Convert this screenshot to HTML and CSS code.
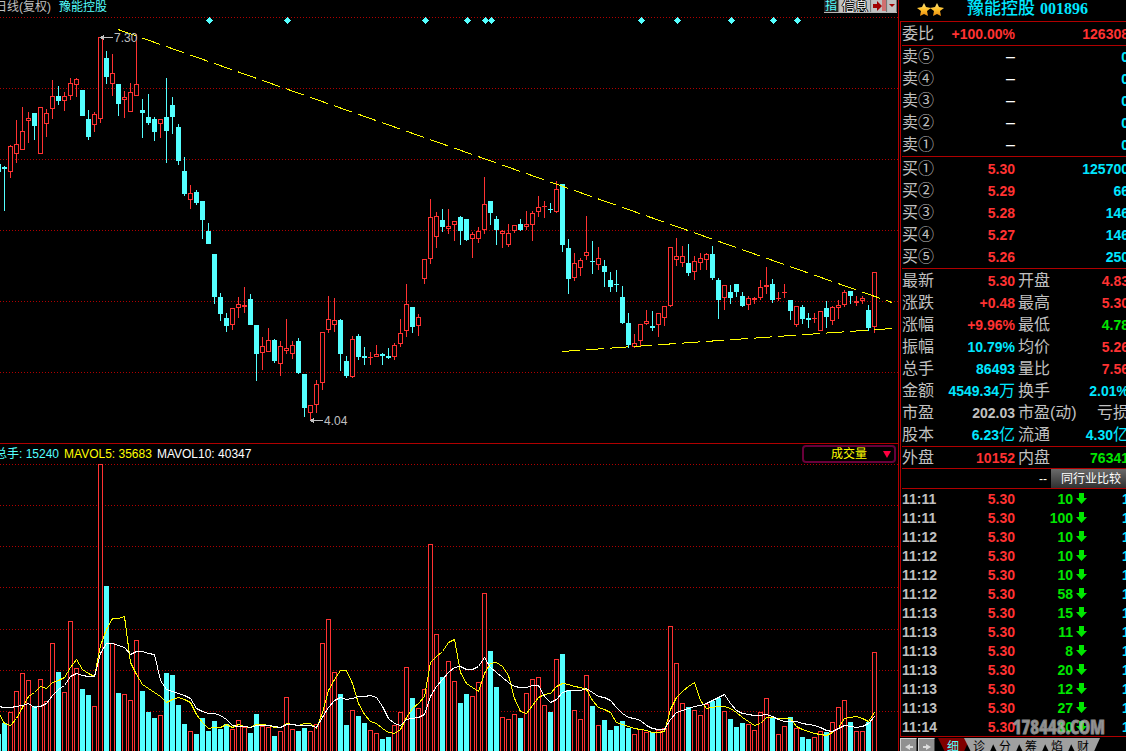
FILE: index.html
```html
<!DOCTYPE html>
<html lang="zh-CN">
<head>
<meta charset="utf-8">
<title>豫能控股 001896</title>
<link rel="stylesheet" href="styles.css">
</head>
<body>
<div class="app">
  <main class="charts">
    <header class="chart-head">
      <div class="chart-title"><span class="period">日线(复权)</span><span class="cyan">豫能控股</span></div>
      <div class="tools">
        <button class="tool tool-index" type="button">指</button>
        <button class="tool tool-info" type="button">信息</button>
        <button class="tool" type="button" aria-label="隐藏侧栏"><svg width="14" height="12" viewBox="0 0 14 12"><path d="M1 4h4V1l5 5-5 5V8H1z" fill="#a00000"/><path d="M11 0v11M13 0v11" stroke="#e02020"/></svg></button>
        <button class="tool" type="button" aria-label="更多"><svg width="8" height="12" viewBox="0 0 8 12"><path d="M1 4h6L4 7z" fill="#a00000"/></svg></button>
      </div>
    </header>
    <svg class="plot" id="price" viewBox="0 14 898 429" shape-rendering="crispEdges"></svg>
    <div class="volume-head">
      <div class="legend"><span class="cyan">总手: 15240</span><span class="yellow">MAVOL5: 35683</span><span class="white">MAVOL10: 40347</span></div>
      <label class="picker"><select aria-label="指标"><option>成交量</option></select><svg width="8" height="7" viewBox="0 0 8 7"><path d="M0 0h8L4 7z" fill="#ff0040"/></svg></label>
    </div>
    <svg class="plot" id="volume" viewBox="0 464 898 287" shape-rendering="crispEdges"></svg>
  </main>

  <aside class="side">
    <h1 class="stock">
      <svg width="28" height="15" viewBox="0 0 28 15"><defs><linearGradient id="gold" x1="0" y1="0" x2="0" y2="1"><stop offset="0" stop-color="#ffe680"/><stop offset=".5" stop-color="#ffc02a"/><stop offset="1" stop-color="#e88a10"/></linearGradient></defs><path id="star" fill="url(#gold)" d="M7 1l2 4 5 1-4 3 1 5-4-2-4 2 1-5-4-3 5-1z"/><use href="#star" x="13"/></svg>
      <span class="stock-name">豫能控股</span><span class="stock-code">001896</span>
    </h1>
    <div class="quote">
      <table class="grid3 ratio"><colgroup><col class="c-label"><col class="c-value"><col class="c-amount"></colgroup>
        <tr><th>委比</th><td class="red">+100.00%</td><td class="red">126308</td></tr>
      </table>
      <table class="grid3 rule"><colgroup><col class="c-label"><col class="c-value"><col class="c-amount"></colgroup>
        <tr><th>卖⑤</th><td class="dash">–</td><td class="aqua">0</td></tr>
        <tr><th>卖④</th><td class="dash">–</td><td class="aqua">0</td></tr>
        <tr><th>卖③</th><td class="dash">–</td><td class="aqua">0</td></tr>
        <tr><th>卖②</th><td class="dash">–</td><td class="aqua">0</td></tr>
        <tr><th>卖①</th><td class="dash">–</td><td class="aqua">0</td></tr>
      </table>
      <table class="grid3 rule roomy"><colgroup><col class="c-label"><col class="c-value"><col class="c-amount"></colgroup>
        <tr><th>买①</th><td class="red">5.30</td><td class="aqua">125700</td></tr>
        <tr><th>买②</th><td class="red">5.29</td><td class="aqua">66</td></tr>
        <tr><th>买③</th><td class="red">5.28</td><td class="aqua">146</td></tr>
        <tr><th>买④</th><td class="red">5.27</td><td class="aqua">146</td></tr>
        <tr><th>买⑤</th><td class="red">5.26</td><td class="aqua">250</td></tr>
      </table>
      <table class="grid4 rule roomy"><colgroup><col class="c-label"><col class="c-value"><col class="c-label2"><col class="c-value2"></colgroup>
        <tr><th>最新</th><td class="red">5.30</td><th>开盘</th><td class="red">4.83</td></tr>
        <tr><th>涨跌</th><td class="red">+0.48</td><th>最高</th><td class="red">5.30</td></tr>
        <tr><th>涨幅</th><td class="red">+9.96%</td><th>最低</th><td class="green">4.78</td></tr>
        <tr><th>振幅</th><td class="aqua">10.79%</td><th>均价</th><td class="red">5.26</td></tr>
        <tr><th>总手</th><td class="aqua">86493</td><th>量比</th><td class="red">7.56</td></tr>
        <tr><th>金额</th><td class="aqua">4549.34<span class="unit">万</span></td><th>换手</th><td class="aqua">2.01%</td></tr>
        <tr><th>市盈</th><td class="gray">202.03</td><th>市盈(动)</th><td class="gray"><span class="unit">亏损</span></td></tr>
        <tr><th>股本</th><td class="aqua">6.23<span class="unit">亿</span></td><th>流通</th><td class="aqua">4.30<span class="unit">亿</span></td></tr>
      </table>
      <table class="grid4 rule inout"><colgroup><col class="c-label"><col class="c-value"><col class="c-label2"><col class="c-value2"></colgroup>
        <tr><th>外盘</th><td class="red">10152</td><th>内盘</th><td class="green">76341</td></tr>
      </table>
      <div class="compare rule"><span>--</span><button type="button">同行业比较</button></div>
      <table class="ticks rule"><colgroup><col class="t-time"><col class="t-price"><col class="t-vol"><col class="t-arrow"><col class="t-count"></colgroup><tbody id="ticks"></tbody></table>
      <div class="watermark">178448.COM</div>
    </div>
    <nav class="tabs rule">
      <button class="step" type="button" aria-label="上一页"><svg width="8" height="6" viewBox="0 0 8 6"><path d="M0 3l5-3v2h3v2H5v2z" fill="#ddd"/></svg></button>
      <button class="step" type="button" aria-label="下一页"><svg width="8" height="6" viewBox="0 0 8 6"><path d="M8 3L3 0v2H0v2h3v2z" fill="#ddd"/></svg></button>
      <div class="tab-list">
        <button class="tab active" type="button">细</button><button class="tab" type="button">诊</button><button class="tab" type="button">分</button><button class="tab" type="button">筹</button><button class="tab" type="button">焰</button><button class="tab" type="button">财</button>
      </div>
    </nav>
  </aside>
</div>
<script src="chart.js"></script>
</body>
</html>
```

FILE: styles.css
```css
* { box-sizing: border-box; }
body {
  margin: 0;
  background: #000;
  color: #c0c0c0;
  font: 12px/14px "Liberation Sans", "Noto Sans CJK SC", sans-serif;
  overflow: hidden;
}
button, select { font: inherit; color: inherit; border: 0; padding: 0; margin: 0; background: none; }
.app { display: grid; grid-template-columns: minmax(0, 1fr) 228px; height: 100vh; overflow: hidden; }
.charts { min-width: 0; overflow: hidden; }
.plot { display: block; width: 100%; height: auto; }

.cyan { color: #54ffff; }
.yellow { color: #ffff00; }
.white { color: #fff; }
.red { color: #ff3232; }
.aqua { color: #00e6ff; }
.green { color: #00e600; }
.gray { color: #c0c0c0; }

.chart-head { display: flex; justify-content: space-between; height: 14px; }
.chart-title { display: flex; gap: 8px; margin-left: -5px; white-space: nowrap; line-height: 15px; }
.tools { display: flex; height: 13px; margin-right: 1px; background: #b8b8b8; gap: 1px; }
.tool { height: 12px; line-height: 11px; overflow: hidden; border-right: 1px solid #777; background: #c0c0c0; }
.tool svg { display: block; }
.tool-index { width: 15px; background: #222; color: #54ffff; }
.tool-info { width: 31px; background: #c0c0c0; color: #fff; font-size: 13px; text-shadow: 1px 0 #000, -1px 0 #000, 0 1px #000, 0 -1px #000; }

.volume-head { display: flex; justify-content: space-between; height: 21px; border-top: 1px solid #b00000; }
.legend { display: flex; gap: 5px; margin-left: -5px; padding-top: 3px; white-space: nowrap; }
.picker { display: flex; align-items: center; width: 94px; height: 18px; margin: 1px 2px 0 0; padding-right: 3px; border: 2px solid #68003a; border-radius: 4px; }
.picker select { flex: 1; min-width: 0; height: 14px; padding-left: 27px; appearance: none; color: #ffff00; line-height: 14px; }

.side { position: relative; display: flex; flex-direction: column; border-left: 1px solid #b00000; overflow: hidden; }
.stock { display: flex; align-items: center; height: 21px; margin: 0; padding: 0 0 3px 18px; color: #00e6ff; font-size: 17px; line-height: 18px; white-space: nowrap; }
.stock-name { margin-left: 22px; font-weight: 500; }
.stock-code { margin-left: 5px; font: bold 16px/18px "Liberation Serif", serif; }
.stock svg { flex: none; }
.quote { position: relative; margin-left: 1px; padding-left: 1px; border-left: 1px solid #b00000; border-top: 1px solid #b00000; overflow: hidden; }
.rule { border-top: 1px solid #b00000; }

table { width: 227px; table-layout: fixed; border-collapse: separate; border-spacing: 0; font-size: 14px; line-height: 20px; }
th, td { padding: 0; height: 22px; white-space: nowrap; }
th { font-weight: 400; font-size: 16px; text-align: left; }
td { font-weight: 700; text-align: right; }
.unit { font-size: 16px; font-weight: 400; }
.dash { color: #fff; font-size: 16px; font-weight: 400; line-height: 18px; }
.ratio td, .ratio th { height: 23px; }
.roomy { padding-top: 1px; }
.inout td, .inout th { height: 21px; }
.c-label { width: 36px; }
.c-value { width: 77px; }
.c-amount { width: 114px; }
.c-label2 { width: 60px; }
.c-value2 { width: 54px; }
.grid4 th:nth-child(3) { padding-left: 3px; }

.compare { display: flex; height: 20px; width: 224px; justify-content: flex-end; align-items: center; gap: 4px; color: #ffe; }
.compare button { width: 75px; height: 19px; padding-left: 5px; color: #fff; background: linear-gradient(#6a6a6a, #303030); }

.ticks td { height: 19px; line-height: 18px; }
.ticks td:first-child { text-align: left; }
.ticks td:last-child { text-align: left; padding-left: 34px; }
.ticks svg { display: block; margin-left: 3px; }
.t-time { width: 40px; }
.t-price { width: 73px; }
.t-vol { width: 58px; }
.t-arrow { width: 15px; }
.t-count { width: 60px; }
.watermark { position: absolute; right: 21px; bottom: -1px; color: #bbb; opacity: .8; font: bold 19px/20px "Liberation Sans Narrow", "Open Sans Condensed", "DejaVu Sans Condensed", sans-serif; -webkit-text-stroke: 1px #aaa; }

.tabs { display: flex; flex: 1; margin-left: 1px; padding-top: 1px; gap: 1px; min-height: 0; }
.step { display: grid; place-items: center; width: 17px; height: 17px; background: #909090; border: 1px solid #d0d0d0; border-right-color: #444; }
.tab-list { display: flex; }
.tab { width: 34px; height: 18px; margin-right: -8px; line-height: 17px; color: #000; background: #a0a0a0; clip-path: polygon(2px 0, 100% 0, 26px 100%, 11px 100%); }
.active { position: relative; color: #54ffff; background: #800000; }
```

FILE: chart.js
```js
// direction, high, body top, body bottom, low, volume top
const bars = `d 164 164 172 172 734
d 166 167 169 211 723
u 145 146 172 178 712
u 120 144 154 163 691
u 107 131 150 150 673
u 112 118 121 143 680
d 113 113 126 140 706
u 107 107 154 154 679
u 109 113 124 137 701
u 80 96 109 119 643
d 86 96 101 105 672
u 92 96 101 111 692
u 78 83 96 100 621
u 78 79 85 97 668
d 90 90 116 116 689
d 110 119 137 140 695
u 112 114 125 132 706
u 37 37 119 123 464
d 51 58 77 84 586
u 54 73 84 96 643
d 84 84 104 116 693
u 91 97 100 118 694
u 83 92 112 112 700
u 34 84 96 96 640
d 99 110 113 138 691
d 94 117 123 125 712
d 117 119 132 141 718
u 119 119 124 138 715
d 78 117 131 163 673
d 97 105 117 134 675
d 124 127 161 165 705
d 157 171 194 196 724
u 185 193 200 209 731
d 190 192 203 205 734
d 201 201 220 239 718
d 223 231 244 244 731
d 254 254 297 304 721
d 293 297 314 321 729
d 313 318 326 332 724
u 308 308 325 330 729
u 297 304 308 318 720
u 287 305 307 313 727
d 294 299 325 325 733
d 325 325 354 381 714
u 337 346 353 370 726
u 328 340 352 352 727
d 339 340 361 363 736
u 341 346 364 376 731
u 319 348 351 354 697
u 341 345 354 359 729
d 338 341 373 374 731
d 374 374 408 417 728
u 405 405 413 420 731
u 380 384 405 413 724
u 332 332 383 390 643
u 296 319 330 333 619
u 298 320 325 332 672
d 319 320 354 371 694
d 356 361 376 378 725
u 336 339 377 378 710
d 334 336 357 360 716
d 347 356 358 365 723
u 352 357 358 365 730
u 345 354 357 357 733
d 353 354 356 365 739
d 348 356 358 359 737
u 343 345 357 360 725
u 319 333 344 347 712
u 284 304 331 337 667
d 307 307 327 333 698
u 314 317 326 336 708
u 259 259 279 284 689
u 199 217 259 264 544
u 212 216 237 248 634
d 209 220 227 232 677
u 209 226 229 234 661
u 221 221 225 241 681
d 216 217 231 245 703
d 219 219 240 241 694
u 232 234 239 258 696
u 227 231 239 243 682
u 177 204 230 234 593
d 201 201 213 225 651
d 216 219 230 245 687
u 230 231 234 248 717
u 224 233 245 247 719
u 225 225 231 233 714
d 219 224 230 231 718
u 211 224 227 230 693
u 211 213 225 241 679
u 196 207 212 217 677
u 201 206 207 218 705
d 203 209 210 213 712
u 181 189 212 213 659
d 184 184 245 252 654
d 239 248 279 294 690
u 253 263 278 281 710
u 258 260 268 276 719
u 216 252 256 260 675
d 241 261 262 274 706
u 247 258 265 270 725
d 260 266 272 287 720
d 272 280 287 292 730
d 270 284 285 292 726
d 286 297 323 324 721
d 313 323 345 348 728
u 334 343 347 348 734
u 324 324 341 347 729
u 310 321 324 325 732
d 311 326 328 331 732
u 313 313 325 337 730
u 306 306 318 326 728
u 247 247 306 307 626
u 238 256 260 266 663
u 246 256 263 267 703
d 244 263 273 276 707
u 256 261 272 280 710
u 253 258 263 270 715
u 253 254 260 270 704
d 246 254 278 280 701
d 278 280 300 319 698
u 285 285 298 310 711
d 285 292 298 304 719
d 284 284 292 297 727
d 292 296 306 307 723
u 296 298 305 310 724
u 297 298 300 304 730
u 280 287 298 300 712
u 267 285 287 294 698
d 279 284 300 303 718
u 292 298 299 301 734
u 284 292 293 298 726
d 300 300 311 320 717
u 306 306 325 327 728
d 305 307 319 324 737
d 313 318 320 328 739
u 313 318 319 323 737
u 311 311 331 331 731
d 301 308 317 328 732
u 306 307 321 325 722
u 300 305 308 319 707
u 290 292 305 307 700
d 291 291 296 304 722
u 296 301 303 306 731
u 296 298 301 304 731
d 305 310 328 331 722
u 272 272 327 333 652`.split("\n").map(line => line.split(" "));

const ma5 = [712,723,725,718,707,696,692,686,688,682,680,677,667,659,669,673,676,645,629,618,618,616,662,674,684,688,692,696,702,699,697,699,702,714,722,728,727,727,724,727,724,726,727,724,724,725,727,727,723,724,725,723,723,728,712,690,679,670,670,683,703,714,721,723,728,732,733,729,717,708,703,696,662,656,651,642,639,672,683,687,691,673,663,662,666,675,698,711,713,705,697,694,693,686,683,684,686,687,689,700,707,709,712,722,724,726,728,729,730,732,732,731,709,697,691,686,682,700,708,707,706,706,708,712,717,721,725,723,717,717,718,718,718,726,729,731,733,734,735,732,727,718,717,716,718,721,712];
const ma10 = [706,707,707,706,705,703,707,706,703,695,689,685,676,673,675,676,676,653,643,643,645,647,654,651,651,653,654,680,689,691,693,695,698,708,711,713,713,715,719,725,726,726,727,725,725,725,726,727,724,724,725,725,725,727,717,707,700,697,699,698,696,696,695,697,706,718,723,725,719,718,717,714,696,686,679,672,667,666,669,669,666,657,667,672,677,682,686,687,687,685,685,696,702,699,692,690,690,690,688,692,696,697,700,707,713,717,718,720,725,728,729,729,719,712,710,708,706,705,703,700,697,694,703,710,713,714,715,715,714,716,719,721,721,721,723,724,725,727,730,731,728,725,726,727,726,723,716];
const events = [209, 287, 425, 467, 485, 491, 641, 677, 731, 773, 797];

const UP = "#ff3232", DOWN = "#54ffff";
const rect = (x, y, w, h, fill) => `<rect x="${x}" y="${y}" width="${w}" height="${h}" fill="${fill}"/>`;
const gridLine = y => `<path d="M0 ${y}.5H898" stroke="#b00000" stroke-dasharray="1 2"/>`;
const hollow = (x, y, h) => rect(x, y, 5, h, UP) + (h > 2 ? rect(x + 1, y + 1, 3, h - 2, "#000") : "");

let price = [17, 88, 159, 230, 301, 372].map(gridLine).join("");
let volume = [464, 505, 546, 587, 629, 670, 711].map(gridLine).join("");

bars.forEach(([dir, ...nums], i) => {
  const [high, top, bottom, low, vol] = nums.map(Number);
  const x = 6 * i - 4;
  const color = dir === "u" ? UP : DOWN;
  price += rect(x + 2, high, 1, low - high, color);
  price += dir === "u" ? hollow(x, top, bottom - top) : rect(x, top, 5, bottom - top, DOWN);
  volume += dir === "u" ? hollow(x, vol, 760 - vol) : rect(x, vol, 5, 760 - vol, DOWN);
});

price += events.map(x => `<path d="M${x - 3} 20.5L${x + 0.5} 17L${x + 4} 20.5L${x + 0.5} 24z" fill="${DOWN}"/>`).join("");
price += `<path d="M118 29.500L892 302.500" pathLength="774" stroke="#ff0" stroke-dasharray="18 6"/>
<path d="M562 351.500L892 328.500" pathLength="330" stroke="#ff0" stroke-dasharray="18 6"/>
<path d="M102 37.500h11M312 420.500h11" stroke="#c0c0c0"/>
<path d="M100 37.500l4-3v6zM310 420.500l4-3v6z" fill="#c0c0c0"/>
<text x="114" y="42">7.30</text><text x="324" y="425">4.04</text>`;

const average = (values, color) =>
  `<polyline fill="none" stroke="${color}" points="${values.map((y, i) => `${6 * i - 1.5},${y + 0.5}`).join(" ")}"/>`;
volume += average(ma5, "#ff0") + average(ma10, "#fff");

document.getElementById("price").innerHTML = price;
document.getElementById("volume").innerHTML = volume;
document.querySelectorAll("#price text").forEach(t => { t.setAttribute("fill", "#c0c0c0"); t.setAttribute("font-size", "12"); });

const trades = [["11:11", 10], ["11:11", 100], ["11:12", 10], ["11:12", 10], ["11:12", 10], ["11:12", 58], ["11:13", 15],
  ["11:13", 11], ["11:13", 8], ["11:13", 20], ["11:13", 12], ["11:13", 27], ["11:14", 10]];
document.getElementById("ticks").innerHTML = trades.map(([time, lots]) =>
  `<tr><td>${time}</td><td class="red">5.30</td><td class="green">${lots}</td><td><svg width="11" height="11" viewBox="0 0 11 11"><path d="M3 0h5v5h3L5.500 11 0 5h3z" fill="#00e600"/></svg></td><td class="aqua">1</td></tr>`).join("");
```
